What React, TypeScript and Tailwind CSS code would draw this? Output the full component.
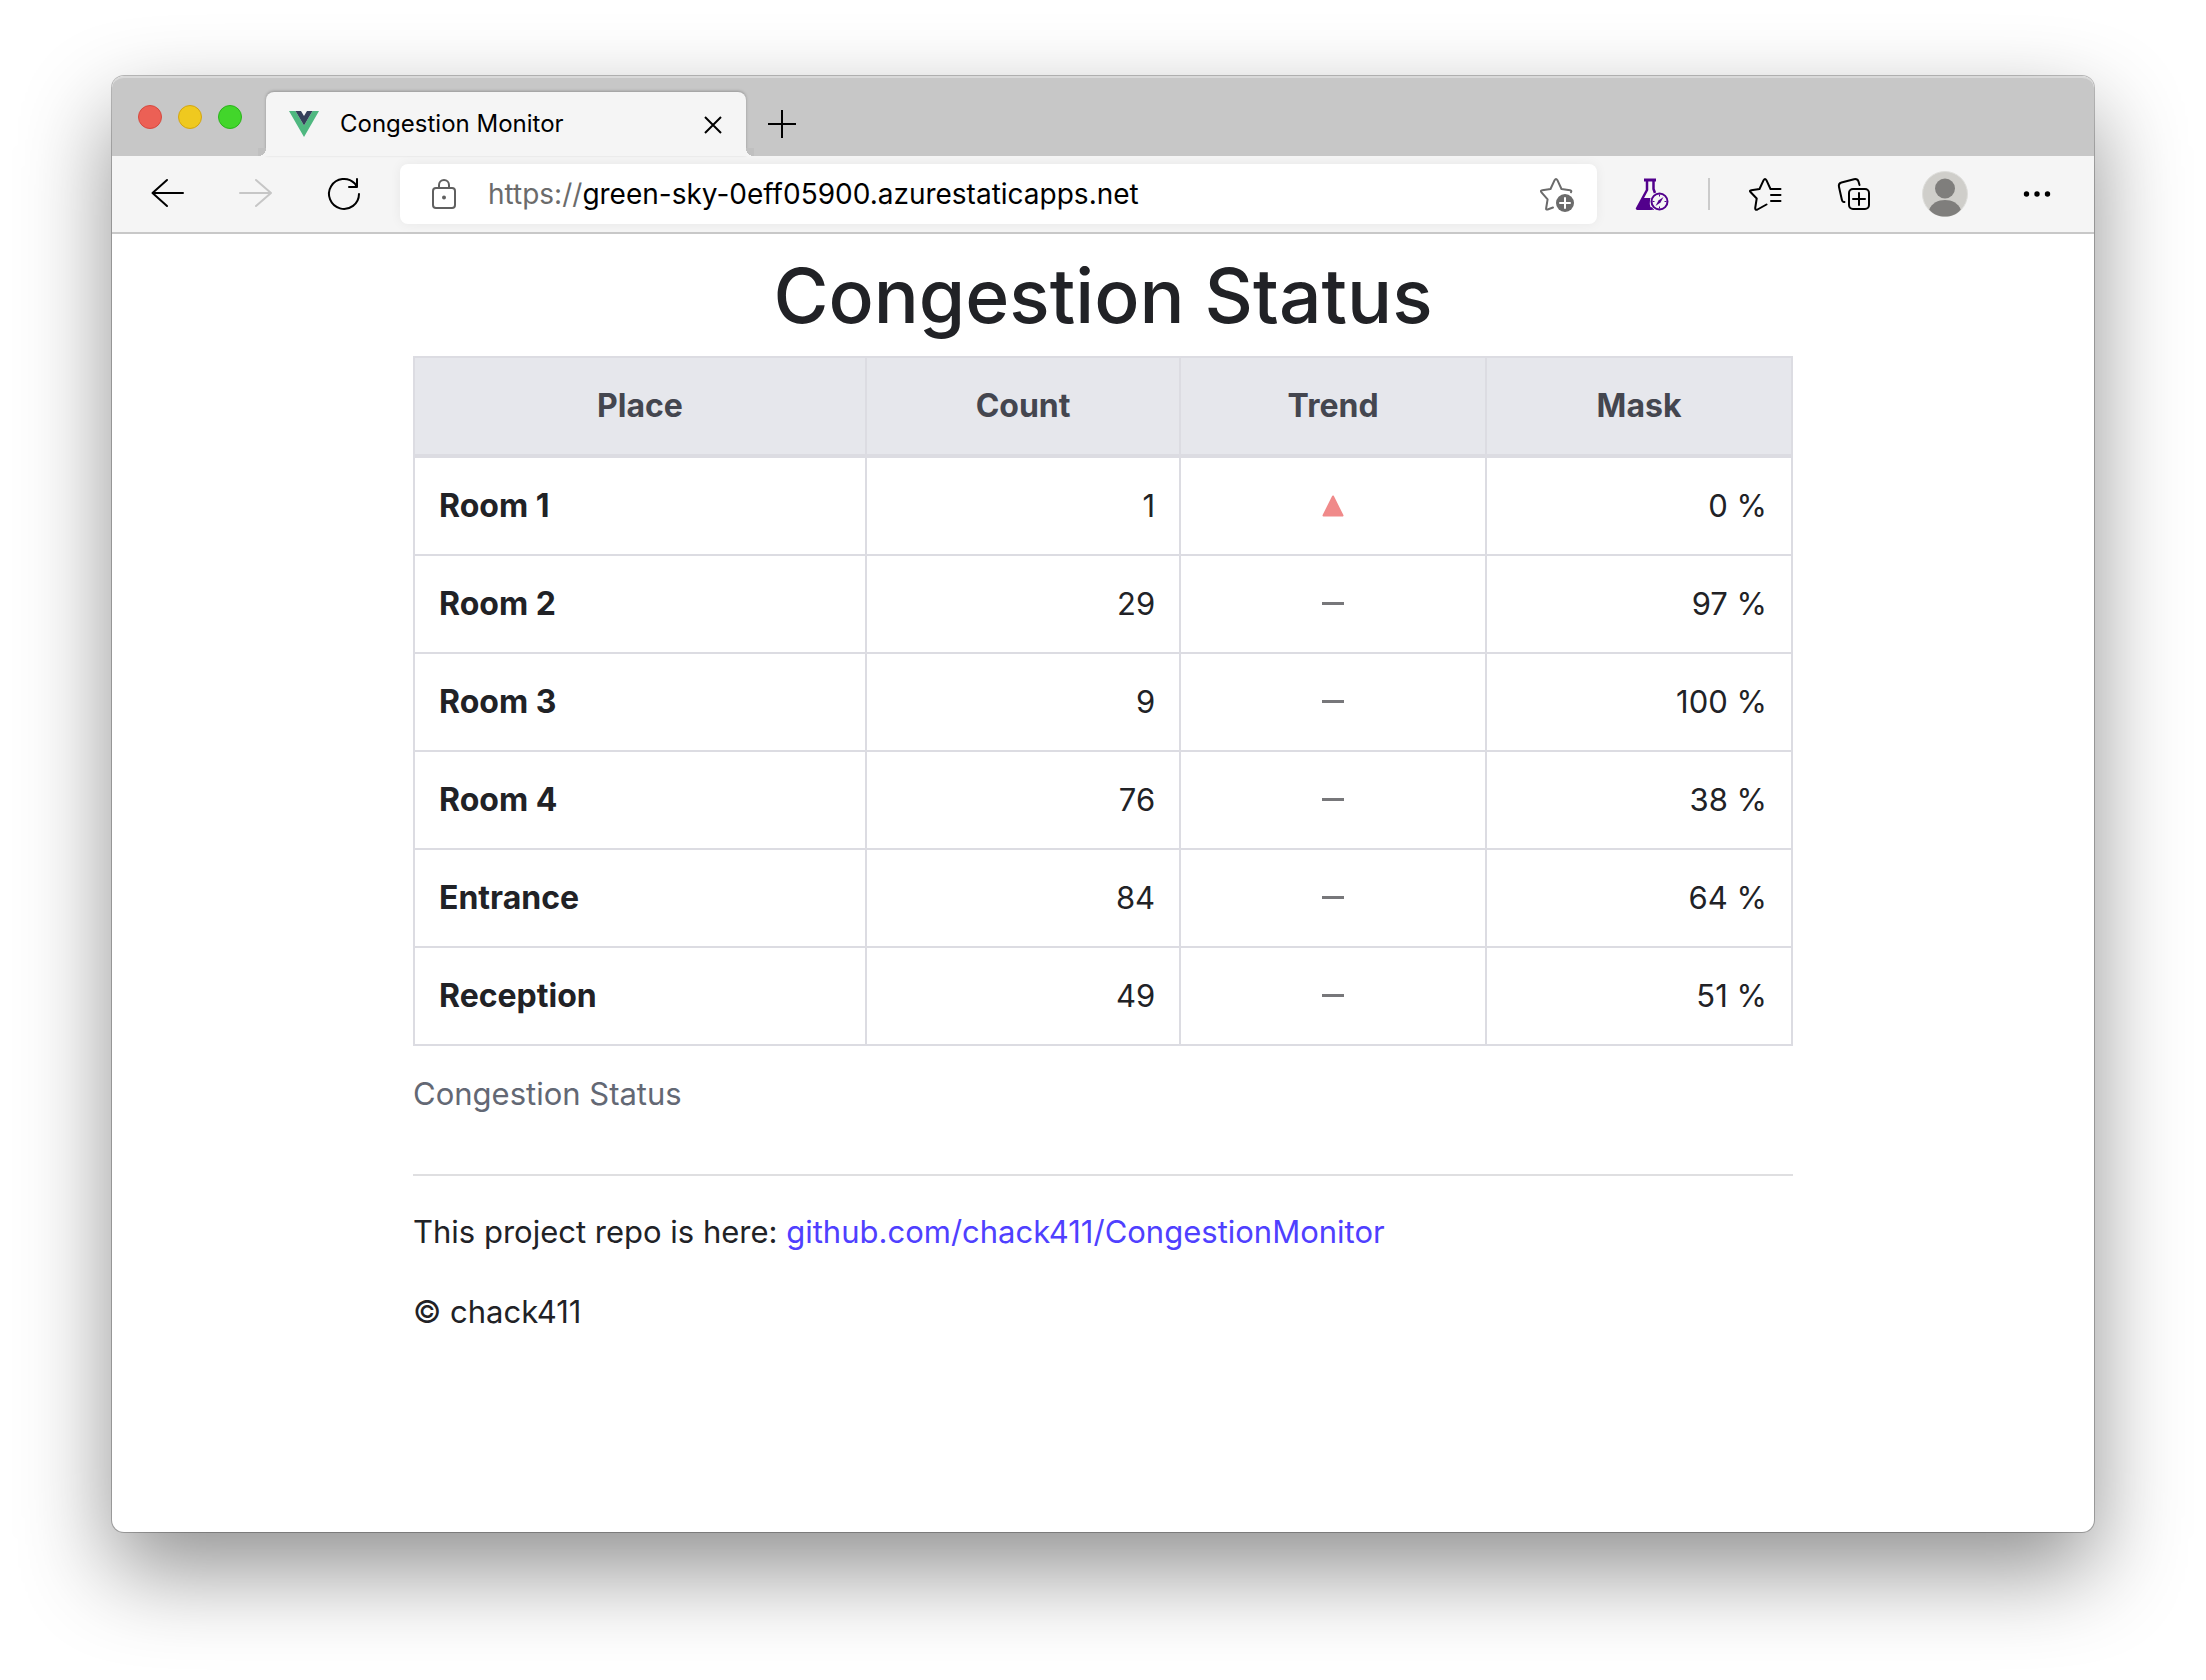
import React from "react";

const rows = [
  { place: "Room 1", count: 1, rising: true, mask: 0 },
  { place: "Room 2", count: 29, rising: false, mask: 97 },
  { place: "Room 3", count: 9, rising: false, mask: 100 },
  { place: "Room 4", count: 76, rising: false, mask: 38 },
  { place: "Entrance", count: 84, rising: false, mask: 64 },
  { place: "Reception", count: 49, rising: false, mask: 51 },
];

function Stroke({
  d,
  className,
  width = 2,
}: {
  d: string;
  className: string;
  width?: number;
}) {
  return (
    <svg viewBox="0 0 36 36" className={className} fill="none" stroke="currentColor" strokeWidth={width} strokeLinecap="round" strokeLinejoin="round" aria-hidden="true">
      <path d={d} />
    </svg>
  );
}

function VueLogo() {
  return (
    <svg viewBox="0 0 32 28" className="h-7 w-8" aria-hidden="true">
      <path d="M1 1h6.500L16 15.500 24.500 1H31L16 27z" fill="#4fb880" />
      <path d="M7.500 1h5.500l3 5 3-5h5.500L16 15.500z" fill="#35405a" />
    </svg>
  );
}

function LockIcon() {
  return (
    <svg viewBox="0 0 28 34" className="h-[34px] w-7 shrink-0 text-[#606060]" fill="none" stroke="currentColor" strokeWidth="2" aria-hidden="true">
      <rect x="3" y="11" width="22" height="20" rx="3" />
      <path d="M9 11V8a5 5 0 0 1 10 0v3" />
      <circle cx="14" cy="20.500" r="2" fill="currentColor" stroke="none" />
    </svg>
  );
}

function StarAddIcon() {
  return (
    <svg viewBox="0 0 36 36" className="size-9 text-[#6b6b6b]" fill="none" stroke="currentColor" strokeWidth="2" strokeLinecap="round" strokeLinejoin="round" aria-hidden="true">
      <path d="M14 31.500L8.600 33.500Q7 34 7.100 32.500L8.600 23.300L2.500 16.300Q1 14.600 3.300 14.200L11.500 13L15.600 4.200Q17 1.900 18.400 4.200L22.500 13L31 14.200Q33 14.600 32 16.200" />
      <circle cx="26" cy="27" r="9" fill="currentColor" stroke="none" />
      <path d="M26 22v10M21 27h10" stroke="#fff" />
    </svg>
  );
}

function FlaskIcon() {
  return (
    <svg viewBox="0 0 36 36" className="size-9" fill="none" stroke="#52008c" aria-hidden="true">
      <path d="M10 4H22" strokeWidth="3" />
      <path d="M13 4V14L3 32.500H20M19.500 4V13L21 17" strokeWidth="2.500" strokeLinejoin="round" />
      <path d="M9 22H17Q14 28 18 34H2.500z" fill="#52008c" stroke="none" />
      <circle cx="25.500" cy="25.500" r="9.500" fill="#f5f5f5" stroke="none" />
      <circle cx="25.500" cy="25.500" r="8" strokeWidth="2" fill="#f5f5f5" />
      <path d="M29.500 21L26.500 26.500L21.500 30L24.500 24.500z" fill="#52008c" stroke="none" />
      <path d="M25.500 18.500v2M25.500 30.500v2M18.500 25.500h2M30.500 25.500h2" strokeWidth="1" />
    </svg>
  );
}

function CollectionsIcon() {
  return (
    <svg viewBox="0 0 36 36" className="size-9" fill="none" stroke="currentColor" strokeWidth="2" strokeLinecap="round" strokeLinejoin="round" aria-hidden="true">
      <path d="M8.500 26Q6.500 26.500 5.800 23.500L3 11Q2.200 7.500 5.500 6.500L18 3.200Q21.500 2.500 22.500 5.500L23.500 9" />
      <rect x="13" y="13" width="20" height="20" rx="4" />
      <path d="M23 17v12M17 23h12" />
    </svg>
  );
}

function ProfileIcon() {
  return (
    <svg viewBox="0 0 46 46" className="size-[46px]" aria-hidden="true">
      <circle cx="23" cy="23" r="22.500" fill="#cfceca" stroke="#dededb" />
      <circle cx="23" cy="17.500" r="10" fill="#7f7e7c" />
      <path d="M7.200 38.500C10 32 16 29 23 29s13 3 15.800 9.500C34 44 29 45.500 23 45.500S12 44 7.200 38.500z" fill="#7f7e7c" />
    </svg>
  );
}

function TabStrip() {
  return (
    <div className="flex h-20 items-end rounded-t-[12px] border-t-2 border-[#d9d9d9] bg-[#c7c7c7]">
      <div className="flex w-[154px] shrink-0 items-center gap-4 self-start pt-[27px] pl-[26px]">
        <button aria-label="Close window" className="size-6 rounded-full border border-[#d6493f] bg-[#ec6055]" />
        <button aria-label="Minimize window" className="size-6 rounded-full border border-[#d3a512] bg-[#efc91f]" />
        <button aria-label="Zoom window" className="size-6 rounded-full border border-[#2bb31c] bg-[#42d62b]" />
      </div>
      <div className="relative flex h-16 w-[480px] items-center rounded-t-lg bg-[#f5f5f5] pr-5 pl-[22px] shadow-[0_-1px_3px_rgba(0,0,0,0.25)]">
        <span className="absolute bottom-0 -left-2 size-2 bg-[radial-gradient(circle_at_0_0,#c0c0c0_8px,#f5f5f5_8px)]" />
        <span className="absolute -right-2 bottom-0 size-2 bg-[radial-gradient(circle_at_100%_0,#c0c0c0_8px,#f5f5f5_8px)]" />
        <VueLogo />
        <span className="ml-5 flex-1 text-[24px] leading-8 text-black">Congestion Monitor</span>
        <button aria-label="Close tab">
          <svg viewBox="0 0 26 26" className="size-[26px]" stroke="#000" strokeWidth="2" aria-hidden="true">
            <path d="M5 6L21 22M21 6L5 22" />
          </svg>
        </button>
      </div>
      <button aria-label="New tab" className="mb-4 ml-5">
        <svg viewBox="0 0 32 32" className="size-8" stroke="#000" strokeWidth="2" aria-hidden="true">
          <path d="M16 2v28M2 16h28" />
        </svg>
      </button>
    </div>
  );
}

function Toolbar() {
  return (
    <div className="flex h-[78px] items-center border-b-2 border-[#c8c8c8] bg-[#f5f5f5] pr-[42px] pl-[38px] text-black">
      <button aria-label="Back"><Stroke className="size-9" d="M33 17H2.500M17 4L2.500 17L17 30" /></button>
      <button aria-label="Forward" disabled className="ml-[52px] text-[#c6c6c6]"><Stroke className="size-9" d="M2 17H33M18 4L33 17L18 30" /></button>
      <button aria-label="Reload" className="ml-[52px]">
        <Stroke className="size-9" d="M33 18A15 15 0 1 1 28.800 7.500L31 11M31 3V11H23" />
      </button>
      <div className="ml-[38px] flex h-[60px] min-w-0 flex-1 items-center rounded-lg bg-white pr-[22px] pl-[30px] shadow-[0_0_12px_rgba(0,0,0,0.06)]">
        <LockIcon />
        <a href="https://green-sky-0eff05900.azurestaticapps.net" className="ml-[30px] flex-1 truncate text-[28px] leading-10 text-black">
          <span className="text-[#6b6b6b]">https://</span>green-sky-0eff05900.azurestaticapps.net
        </a>
        <button aria-label="Add to favorites"><StarAddIcon /></button>
      </div>
      <button aria-label="Experiments" className="ml-[37px]"><FlaskIcon /></button>
      <span className="ml-[38px] h-8 w-0.5 bg-[#cbcbcb]" />
      <button aria-label="Favorites" className="ml-[38px]">
        <Stroke className="size-9" d="M18.500 28.500L9.500 33.500Q7 34.500 7.200 32L8.700 22.500L2.500 16Q1 14.600 3.300 14.200L11.500 13L15.600 4.200Q17 1.900 18.400 4.200L22.500 13H32.500M23 19H32.500M23 25H32.500" />
      </button>
      <button aria-label="Collections" className="ml-[52px]"><CollectionsIcon /></button>
      <button aria-label="Profile" className="ml-[50px]"><ProfileIcon /></button>
      <button aria-label="Settings and more" className="ml-[54px]">
        <svg viewBox="0 0 30 30" className="size-[30px]" fill="#000" aria-hidden="true">
          <circle cx="4.500" cy="15" r="2.700" /><circle cx="15" cy="15" r="2.700" /><circle cx="25.500" cy="15" r="2.700" />
        </svg>
      </button>
    </div>
  );
}

function Trend({ rising }: { rising: boolean }) {
  return rising ? (
    <svg viewBox="0 0 22 22" className="mx-auto h-[22px] w-[22px]" role="img" aria-label="Rising">
      <path d="M11 1.500L20.500 20.500H1.500z" fill="#f08a8a" stroke="#f08a8a" strokeWidth="2" strokeLinejoin="round" />
    </svg>
  ) : (
    <svg viewBox="0 0 22 22" className="mx-auto h-[22px] w-[22px]" role="img" aria-label="Steady">
      <path d="M0 10.500h22" stroke="#77777a" strokeWidth="3" />
    </svg>
  );
}

function StatusTable() {
  return (
    <table className="w-full table-fixed border-collapse border-2 border-[#dcdce2]">
      <caption className="caption-bottom py-6 text-left leading-[48px] text-[#636874]">Congestion Status</caption>
      <colgroup>
        <col className="w-[32.8%]" />
        <col className="w-[22.8%]" />
        <col className="w-[22.2%]" />
        <col className="w-[22.2%]" />
      </colgroup>
      <thead className="border-b-4 border-[#dcdce2] bg-[#e6e7ec] text-[#44464f]">
        <tr>
          {["Place", "Count", "Trend", "Mask"].map((h) => (
            <th key={h} scope="col" className="border-x-2 border-[#dcdce2] p-6 text-center text-[32px] leading-[48px] font-bold">{h}</th>
          ))}
        </tr>
      </thead>
      <tbody>
        {rows.map((r) => (
          <tr key={r.place} className="border-b-2 border-[#dcdce2]">
            <th scope="row" className="border-x-2 border-[#dcdce2] p-6 text-left text-[32px] leading-[48px] font-bold">{r.place}</th>
            <td className="border-x-2 border-[#dcdce2] p-6 text-right">{r.count}</td>
            <td className="border-x-2 border-[#dcdce2] p-6 text-center"><Trend rising={r.rising} /></td>
            <td className="border-x-2 border-[#dcdce2] p-6 text-right">{r.mask} %</td>
          </tr>
        ))}
      </tbody>
    </table>
  );
}

export default function App() {
  return (
    <div className="flex min-h-screen bg-white px-28 pt-[76px] pb-[148px] font-['Inter',sans-serif]">
      <div className="flex flex-1 flex-col rounded-[12px] bg-white shadow-[0_0_0_1px_rgba(0,0,0,0.25),0_38px_90px_rgba(0,0,0,0.44)]">
        <TabStrip />
        <Toolbar />
        <main className="mx-auto w-full max-w-[1380px] pt-3.5 text-[31px] leading-[48px] text-[#212226]">
          <h1 className="mb-3 text-center text-[75px] leading-[96px] font-medium">Congestion Status</h1>
          <StatusTable />
          <footer className="mt-8 border-t-2 border-[#dfdfe1] pt-8">
            <p>
              This project repo is here:{" "}
              <a href="https://github.com/chack411/CongestionMonitor" className="text-[#4f40ff]">github.com/chack411/CongestionMonitor</a>
            </p>
            <p className="mt-8">© chack411</p>
          </footer>
        </main>
      </div>
    </div>
  );
}
